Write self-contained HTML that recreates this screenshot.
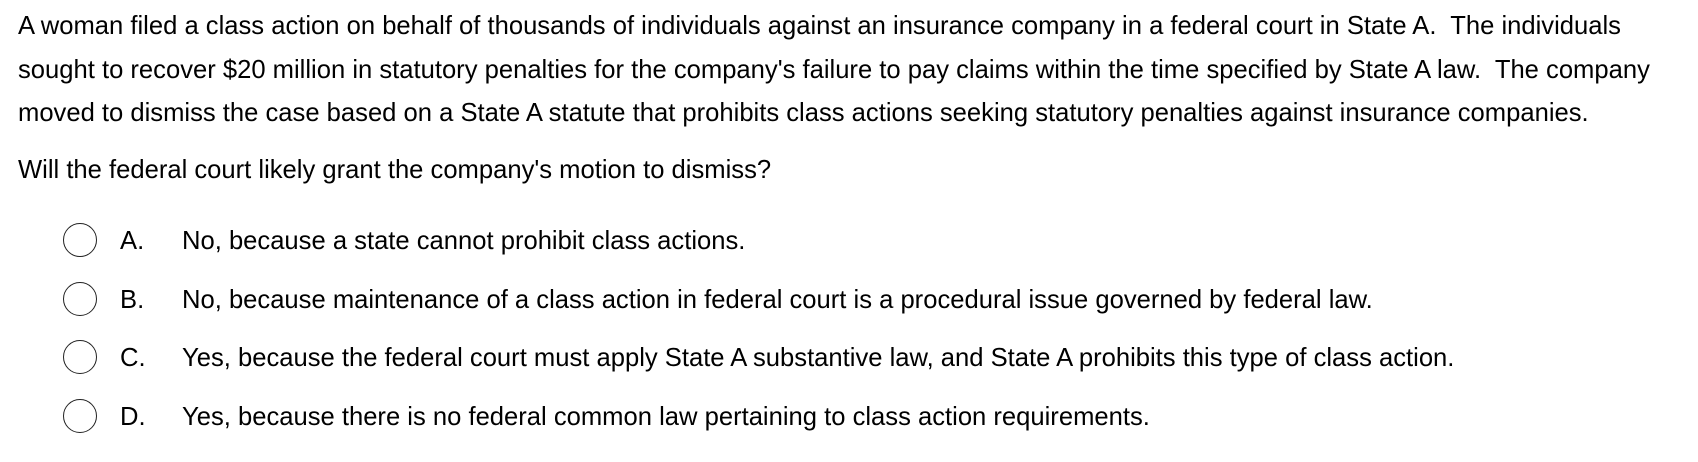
<!DOCTYPE html>
<html><head><style>
body{margin:0;width:1698px;height:462px;background:#fff;font-family:"Liberation Sans",Arial,sans-serif;font-size:25.6px;color:#000;overflow:hidden}
p{position:absolute;left:18px;margin:0;line-height:43.5px;width:1680px;white-space:nowrap}
.opt{position:absolute;left:0;height:34px;width:1698px}
.c{position:absolute;left:63px;top:0;width:32px;height:32px;border:1.3px solid #222;border-radius:50%}
.l{position:absolute;left:120px;top:-2px;line-height:41px}
.t{position:absolute;left:182px;top:-2px;line-height:41px;white-space:nowrap}
</style></head><body>
<p style="top:5px">A woman filed a class action on behalf of thousands of individuals against an insurance company in a federal court in State A.&nbsp; The individuals<br>sought to recover $20 million in statutory penalties for the company's failure to pay claims within the time specified by State A law.&nbsp; The company<br>moved to dismiss the case based on a State A statute that prohibits class actions seeking statutory penalties against insurance companies.</p>
<p style="top:149px">Will the federal court likely grant the company's motion to dismiss?</p>
<div class="opt" style="top:223px"><div class="c"></div><span class="l">A.</span><span class="t">No, because a state cannot prohibit class actions.</span></div>
<div class="opt" style="top:282px"><div class="c"></div><span class="l">B.</span><span class="t">No, because maintenance of a class action in federal court is a procedural issue governed by federal law.</span></div>
<div class="opt" style="top:340px"><div class="c"></div><span class="l">C.</span><span class="t">Yes, because the federal court must apply State A substantive law, and State A prohibits this type of class action.</span></div>
<div class="opt" style="top:399px"><div class="c"></div><span class="l">D.</span><span class="t">Yes, because there is no federal common law pertaining to class action requirements.</span></div>
</body></html>
